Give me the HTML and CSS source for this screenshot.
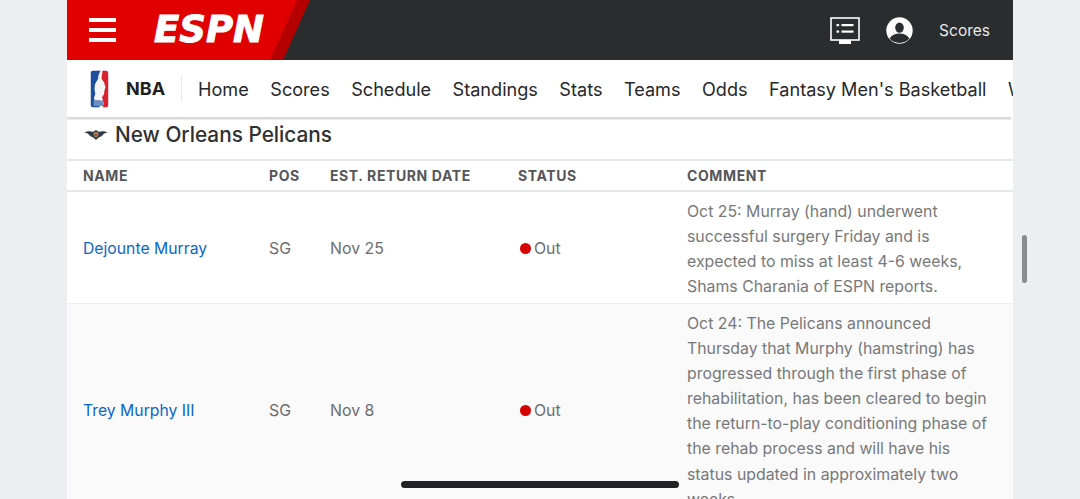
FILE: index.html
```html
<!DOCTYPE html>
<html lang="en">
<head>
<meta charset="utf-8">
<title>NBA Injuries - ESPN</title>
<link rel="stylesheet" href="styles.css">
</head>
<body>
<div class="page">
  <header class="topbar">
    <div class="brand">
      <div class="burger"><span></span><span></span><span></span></div>
      <div class="wordmark">ESPN</div>
    </div>
    <div class="top-actions">
      <svg class="icon-tv" width="30" height="28" viewBox="0 0 30 28">
        <rect x="1" y="1" width="28" height="22" fill="none" stroke="#fff" stroke-width="1.6"/>
        <rect x="6.5" y="7" width="2.6" height="2.2" fill="#fff"/>
        <rect x="11.5" y="7" width="12" height="2.2" fill="#fff"/>
        <rect x="6.5" y="13.5" width="2.6" height="2.2" fill="#fff"/>
        <rect x="11.5" y="13.5" width="12" height="2.2" fill="#fff"/>
        <rect x="9" y="23" width="12" height="4" fill="#fff"/>
      </svg>
      <svg class="icon-user" width="27" height="27" viewBox="0 0 27 27">
        <circle cx="13.5" cy="13.5" r="13.2" fill="#fff"/>
        <ellipse cx="13.5" cy="10.6" rx="4.3" ry="5.2" fill="#2b2c2e"/>
        <path d="M3.6 21.5c2-3.2 5.6-4.9 9.9-4.9s7.900 1.700 9.900 4.900c-2.400 2.900-5.900 4.400-9.900 4.400s-7.500-1.500-9.900-4.400z" fill="#2b2c2e"/>
      </svg>
      <span class="scores-link">Scores</span>
    </div>
  </header>

  <nav class="subnav">
    <svg class="nba-logo" width="19" height="38" viewBox="0 0 19 38">
      <rect x="0" y="0" width="19" height="38" rx="3" fill="#f4f4f6"/>
      <path d="M3 .8h7.500l-2 4.200-.5 4-3 5-.5 5 .8 5-1.300 3.500.5 3H9.500V37.200H3A2.200 2.200 0 0 1 .8 35V3A2.200 2.200 0 0 1 3 .8z" fill="#1d4f9e"/>
      <path d="M12.500.8H16A2.200 2.200 0 0 1 18.200 3V35A2.200 2.200 0 0 1 16 37.200H13l.5-5-1.500-5 2-3 .5-4 1-3-1.500-5-2.500-3.500z" fill="#d8232f"/>
      <rect x="3.500" y="30.500" width="9.500" height="5.500" fill="#6d8fc2"/>
    </svg>
    <span class="league">NBA</span>
    <ul class="nav-items">
      <li>Home</li>
      <li>Scores</li>
      <li>Schedule</li>
      <li>Standings</li>
      <li>Stats</li>
      <li>Teams</li>
      <li>Odds</li>
      <li>Fantasy Men's Basketball</li>
      <li>WNBA</li>
    </ul>
  </nav>

  <main class="content">
    <h2 class="team">
      <svg class="team-logo" width="24" height="12" viewBox="0 0 24 12">
        <path d="M0 3.600c3-1.600 6.500-1.800 9-.8L12 1l3 1.800c2.500-1 6-.8 9 .8-2.500.2-4 1-5 2.200-1.500 1.800-3.500 2.500-4.500 3L12 11 9.500 8.800c-1-.5-3-1.200-4.500-3C4 4.600 2.500 3.800 0 3.600z" fill="#3f4046"/>
        <path d="M9.500 4 12 3l2.500 1-1 3L12 8.500 10.500 7z" fill="#b59a5b"/>
        <path d="M11 4.500h2l-.4 2.500h-1.200z" fill="#b3243a"/>
        <path d="M2.500 3.600c2.500-.6 4.500-.3 6 .4l.3 2c-2-1.500-4-2-6.300-2.400z" fill="#19335f"/>
        <path d="M21.500 3.600c-2.500-.6-4.500-.3-6 .4l-.3 2c2-1.500 4-2 6.300-2.400z" fill="#19335f"/>
      </svg>
      New Orleans Pelicans
    </h2>
    <table class="injuries">
      <colgroup>
        <col class="c-name"><col class="c-pos"><col class="c-date"><col class="c-status"><col class="c-comment">
      </colgroup>
      <thead>
        <tr><th>NAME</th><th>POS</th><th>EST. RETURN DATE</th><th>STATUS</th><th>COMMENT</th></tr>
      </thead>
      <tbody>
        <tr>
          <td class="first"><a class="player" href="#">Dejounte Murray</a></td>
          <td>SG</td>
          <td>Nov 25</td>
          <td><span class="status"><i class="dot"></i>Out</span></td>
          <td class="comment">Oct 25: Murray (hand) underwent successful surgery Friday and is expected to miss at least 4-6 weeks, Shams Charania of ESPN reports.</td>
        </tr>
        <tr class="alt">
          <td class="first"><a class="player" href="#">Trey Murphy III</a></td>
          <td>SG</td>
          <td>Nov 8</td>
          <td><span class="status"><i class="dot"></i>Out</span></td>
          <td class="comment">Oct 24: The Pelicans announced Thursday that Murphy (hamstring) has progressed through the first phase of rehabilitation, has been cleared to begin the return-to-play conditioning phase of the rehab process and will have his status updated in approximately two weeks.</td>
        </tr>
      </tbody>
    </table>
  </main>
</div>
<div class="scroll-thumb"></div>
<div class="home-indicator"></div>
</body>
</html>
```

FILE: styles.css
```css
* { box-sizing: border-box; }
html, body { margin: 0; padding: 0; height: 499px; overflow: hidden; }
body {
  background: #eceef1;
  font-family: Inter, "Liberation Sans", sans-serif;
  color: #6c6d6f;
}
.page {
  width: 946px;
  height: 499px;
  margin-left: 67px;
  background: #fff;
  overflow: hidden;
}
.topbar {
  display: flex;
  justify-content: space-between;
  align-items: center;
  height: 60px;
  background: #2b2c2e;
}
.brand {
  position: relative;
  display: flex;
  align-items: center;
  width: 243px;
  height: 60px;
  padding-left: 22px;
  background: #b50000;
  clip-path: polygon(0 0, 100% 0, 216px 100%, 0 100%);
}
.brand::before {
  content: "";
  position: absolute;
  inset: 0;
  background: #e00000;
  clip-path: polygon(0 0, 230px 0, 203px 100%, 0 100%);
}
.burger {
  position: relative;
  display: flex;
  flex-direction: column;
  gap: 6px;
  width: 27px;
}
.burger span { height: 4px; background: #fff; }
.wordmark {
  position: relative;
  margin-left: 38px;
  font-family: "DejaVu Sans", sans-serif;
  font-size: 37px;
  line-height: 30px;
  font-weight: 700;
  font-style: italic;
  color: #fff;
  -webkit-text-stroke: 1px #fff;
}
.top-actions {
  display: flex;
  align-items: center;
  padding-right: 23px;
}
.icon-tv { margin-top: 2px; }
.icon-user { margin-left: 26px; }
.scores-link {
  margin-left: 26px;
  font-size: 15.500px;
  color: #e8e8e8;
}
.subnav {
  position: relative;
  display: flex;
  align-items: center;
  height: 58px;
  padding-left: 23px;
  background: #fff;
  white-space: nowrap;
}
.subnav::after {
  content: "";
  position: absolute;
  left: 0;
  right: 2px;
  bottom: -2px;
  height: 3px;
  background: linear-gradient(#cfd0d2, #eeeeef);
}
.nba-logo { flex: none; }
.league {
  margin-left: 17px;
  padding-right: 16px;
  font-size: 18px;
  font-weight: 700;
  color: #1f2022;
  border-right: 1px solid #e6e7e8;
  line-height: 26px;
}
.nav-items {
  display: flex;
  gap: 21.500px;
  margin: 0 0 0 16px;
  padding: 0;
  list-style: none;
  font-size: 18.100px;
  color: #26272a;
}
.team {
  display: flex;
  align-items: center;
  gap: 7px;
  height: 41px;
  margin: 0;
  padding: 0 0 8px 17px;
  font-size: 20.800px;
  font-weight: 500;
  color: #2f3032;
}
.injuries {
  width: 946px;
  border-collapse: collapse;
  table-layout: fixed;
  font-size: 15.850px;
}
.c-name { width: 202px; }
.c-pos { width: 61px; }
.c-date { width: 188px; }
.c-status { width: 169px; }
.c-comment { width: 326px; }
th {
  height: 31px;
  padding: 0 0 0 16px;
  text-align: left;
  font-size: 14px;
  font-weight: 700;
  letter-spacing: .6px;
  color: #55565a;
  border-top: 2px solid #e6e7e9;
  border-bottom: 2px solid #e6e7e9;
}
th + th { padding-left: 0; }
td {
  padding: 3px 0 0;
  vertical-align: middle;
  border-bottom: 1px solid #eeeff1;
}
td.first { padding-left: 16px; }
.alt { background: #fafafa; }
.player { color: #0a66c8; text-decoration: none; font-size: 15.750px; }
.status { display: inline-flex; align-items: center; margin-left: 2px; }
.dot {
  width: 11px;
  height: 11px;
  margin-right: 3px;
  border-radius: 50%;
  background: #d40000;
}
.comment {
  padding: 7px 16px 3px 0;
  line-height: 25.150px;
  color: #77787a;
}
.scroll-thumb {
  position: fixed;
  left: 1022px;
  top: 235px;
  width: 5px;
  height: 48px;
  border-radius: 3px;
  background: #8a8b8d;
}
.home-indicator {
  position: fixed;
  left: 401px;
  top: 481px;
  width: 278px;
  height: 7px;
  border-radius: 4px;
  background: #232325;
}
```
